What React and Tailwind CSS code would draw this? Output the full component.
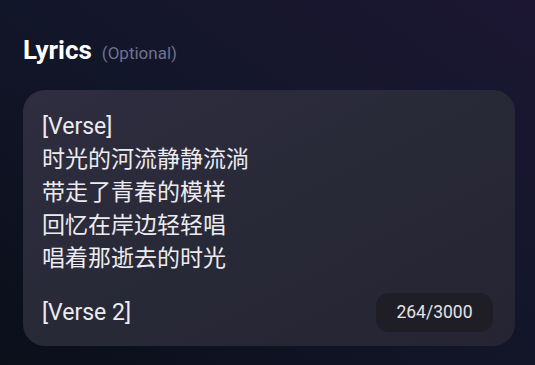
import React from 'react';

const lines = [
  '[Verse]',
  '时光的河流静静流淌',
  '带走了青春的模样',
  '回忆在岸边轻轻唱',
  '唱着那逝去的时光',
];

const App = () => {
  return (
    <div
      className="w-[535px] h-[365px] overflow-hidden bg-gradient-to-tr from-[#0a0f1a] via-[#121629] to-[#1c1632] px-[23px] pt-[34px]"
      style={{ fontFamily: 'Roboto, "Noto Sans CJK SC", sans-serif' }}
    >
      {/* Header */}
      <div className="flex items-baseline">
        <h2 className="text-[26px] leading-[32px] font-bold text-white">Lyrics</h2>
        <span className="ml-[10px] text-[17px] text-[#6f7190]">(Optional)</span>
      </div>

      {/* Lyrics box */}
      <div className="mt-[23px] w-[492px] h-[256px] rounded-[22px] bg-gradient-to-br from-[#2f2d40] via-[#282937] to-[#262432] pl-[19px] pr-[22px] pt-[20px] pb-[14px] flex flex-col justify-between">
        <div className="text-[23px] leading-[33px] text-[#ececf0]">
          {lines.map((line, i) => (
            <div key={i}>{line}</div>
          ))}
        </div>
        <div className="flex items-center justify-between">
          <span className="text-[23px] leading-[33px] text-[#ececf0]">[Verse 2]</span>
          <span className="h-[39px] w-[117px] rounded-[13px] bg-[#1f1e27] flex items-center justify-center text-[17.5px] text-[#e4e4e8]">
            264/3000
          </span>
        </div>
      </div>
    </div>
  );
};

export default App;
